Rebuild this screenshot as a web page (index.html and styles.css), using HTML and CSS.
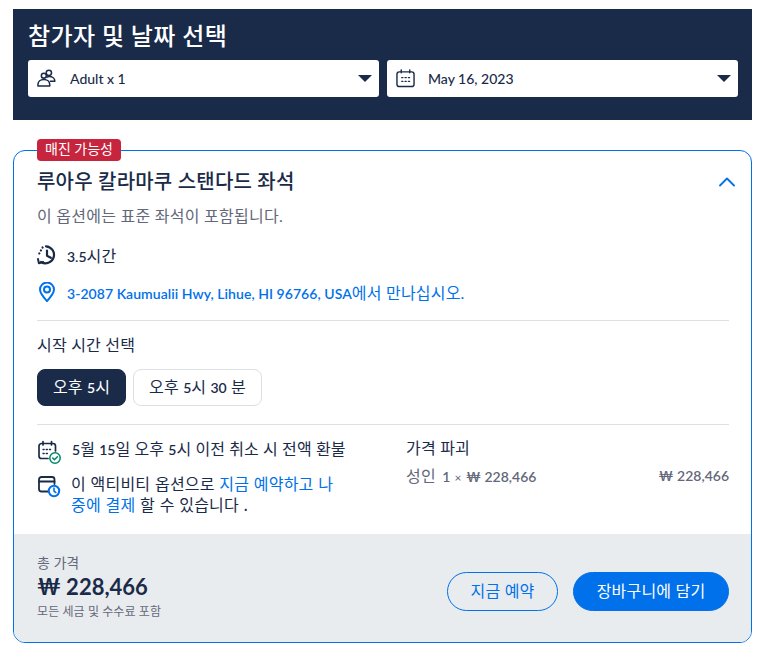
FILE: index.html
```html
<!DOCTYPE html>
<html lang="ko">
<head>
<meta charset="utf-8">
<title>참가자 및 날짜 선택</title>
<link rel="stylesheet" href="styles.css">
</head>
<body>
<main class="page">
  <section class="picker">
    <h1 class="picker-title">참가자 및 날짜 선택</h1>
    <div class="picker-row">
      <div class="select">
        <svg class="select-icon" viewBox="0 0 20 20" fill="none" stroke="#1a2b49" stroke-width="1.6" stroke-linejoin="round" stroke-linecap="round"><circle cx="12.5" cy="4" r="2.8"/><circle cx="7.2" cy="7" r="2.6"/><path d="M1 18v-1.600c0-3.200 2.700-5.400 6.200-5.400s6.200 2.200 6.200 5.400V18z"/><path d="M10.500 8.500c.7-.5 1.400-.6 2.300-.6 3.200 0 6 1.900 6 5.100h-4.800"/></svg>
        <span class="select-text">Adult x 1</span>
        <span class="caret"></span>
      </div>
      <div class="select select-date">
        <svg class="select-icon" viewBox="0 0 20 20" fill="none" stroke="#1a2b49" stroke-width="1.500" stroke-linecap="round"><rect x="1" y="3" width="18" height="15.500" rx="2.500"/><path d="M5.500 1v3M14.500 1v3"/><path stroke-width="1.400" stroke-dasharray="1.300 2.200" d="M6 9h9M6 13h9"/></svg>
        <span class="select-text">May 16, 2023</span>
        <span class="caret"></span>
      </div>
    </div>
  </section>

  <section class="card">
    <span class="badge">매진 가능성</span>
    <div class="card-body">
      <div class="option-head">
        <h2 class="option-title">루아우 칼라마쿠 스탠다드 좌석</h2>
        <svg class="chevron" viewBox="0 0 16 10" fill="none" stroke="#0071eb" stroke-width="1.800" stroke-linecap="round" stroke-linejoin="round"><path d="M1 8.500 8 1.500l7 7"/></svg>
      </div>
      <p class="option-desc">이 옵션에는 표준 좌석이 포함됩니다.</p>
      <div class="fact">
        <svg class="fact-icon" viewBox="0 0 20 20" fill="none" stroke="#1a2b49" stroke-width="2.200" stroke-linecap="round" stroke-linejoin="round"><path d="M9 1.300A8.500 8.500 0 1 1 4 17"/><path d="M10 5.500v5.300l3.800 2"/><path stroke-width="2" d="M1 14l.9 4.200 4.200-1.200"/><path stroke-dasharray="0.100 3.300" d="M5.600 2.400 1 10.800"/></svg>
        <span class="fact-text"><span class="latin">3.5</span>시간</span>
      </div>
      <div class="fact fact-link">
        <svg class="fact-icon" viewBox="0 0 20 20" fill="none" stroke="#0071eb" stroke-width="2" stroke-linejoin="round"><path d="M10 19.200C6 14.800 3 11.500 3 7.600a7 7 0 0 1 14 0c0 3.900-3 7.200-7 11.600z"/><circle cx="10" cy="7.600" r="3"/></svg>
        <span class="fact-text"><span class="latin address">3-2087 Kaumualii Hwy, Lihue, HI 96766, USA</span>에서 만나십시오.</span>
      </div>
      <hr class="rule rule-first">
      <p class="time-label">시작 시간 선택</p>
      <div class="times">
        <span class="time time-active">오후 <span class="latin">5</span>시</span>
        <span class="time">오후 <span class="latin">5</span>시 <span class="latin">30</span> 분</span>
      </div>
      <hr class="rule rule-second">
      <div class="details">
        <div class="policies">
          <div class="policy policy-cancel">
            <svg class="policy-icon" viewBox="0 0 24 24" fill="none" stroke="#1a2b49" stroke-width="1.700" stroke-linecap="round"><path d="M11 18.500H4.500A2.500 2.500 0 0 1 2 16V6a2.500 2.500 0 0 1 2.500-2.500h11.500a2.500 2.500 0 0 1 2.500 2.500v5"/><path d="M6 1.500v3.500M14.500 1.500v3.500"/><path stroke-width="1.300" stroke-dasharray="1.200 2" d="M6 9.500h9M6 13.500h5"/><circle cx="18" cy="18" r="5.200" fill="#fff" stroke="#008768" stroke-width="1.500"/><path d="m15.700 18 1.700 1.700 3-3" stroke="#008768" stroke-width="1.500"/></svg>
            <span><span class="latin">5</span>월 <span class="latin">15</span>일 오후 <span class="latin">5</span>시 이전 취소 시 전액 환불</span>
          </div>
          <div class="policy policy-pay">
            <svg class="policy-icon" viewBox="0 0 24 24" fill="none" stroke="#1a2b49" stroke-width="1.800" stroke-linecap="round"><path d="M11 17.500H4.500A2.500 2.500 0 0 1 2 15V5.500A2.500 2.500 0 0 1 4.500 3h10.500a2.500 2.500 0 0 1 2.500 2.500V10"/><path d="M2 7.500h15.500"/><circle cx="17" cy="17" r="5.200" fill="#fff" stroke="#0071eb" stroke-width="2"/><path d="M17 14v3.200l1.800 1.300" stroke="#0071eb" stroke-width="1.600"/></svg>
            <span class="policy-pay-text">이 액티비티 옵션으로 <span class="link">지금 예약하고 나중에 결제</span> 할 수 있습니다 .</span>
          </div>
        </div>
        <div class="breakdown">
          <p class="breakdown-title">가격 파괴</p>
          <div class="breakdown-row">
            <span>성인 <span class="latin count">1</span> <span class="times-sign">×</span> <span class="latin">₩ 228,466</span></span>
            <span class="latin">₩ 228,466</span>
          </div>
        </div>
      </div>
    </div>
    <div class="summary">
      <div class="total">
        <span class="total-label">총 가격</span>
        <span class="total-price">₩ 228,466</span>
        <span class="total-note">모든 세금 및 수수료 포함</span>
      </div>
      <div class="actions">
        <span class="btn btn-outline">지금 예약</span>
        <span class="btn btn-solid">장바구니에 담기</span>
      </div>
    </div>
  </section>
</main>
</body>
</html>
```
FILE: styles.css
```css
* { box-sizing: border-box; }
html, body { margin: 0; padding: 0; background: #fff; }
body {
  font-family: "Lato", "Noto Sans CJK KR", sans-serif;
  color: #1a2b49;
  font-size: 16px;
  letter-spacing: 0.2px;
}
h1, h2, p, hr { margin: 0; }
.page { width: 758px; height: 653px; padding: 9px 6px 10px 13px; overflow: hidden; }
.latin { font-size: 14px; font-weight: 600; letter-spacing: 0; }
.address { letter-spacing: 0.05px; }

.picker { height: 111px; background: #1a2b49; padding: 12px 14px 0 15px; }
.picker-title { font-size: 24px; line-height: 30px; font-weight: 500; color: #fff; height: 39px; letter-spacing: 0.4px; }
.picker-row { display: flex; gap: 8px; }
.select { flex: 1; height: 37px; background: #fff; border-radius: 3px; display: flex; align-items: center; padding: 0 7px 0 9px; }
.select-icon { width: 19px; height: 19px; flex: none; }
.select-text { flex: 1; margin-left: 13px; font-size: 14px; font-weight: 500; letter-spacing: 0; }
.select:first-child .select-text { margin-left: 14px; }
.caret { width: 0; height: 0; border-left: 7px solid transparent; border-right: 7px solid transparent; border-top: 7px solid #1a2b49; }

.card { position: relative; margin-top: 30px; height: 493px; border: 1px solid #0071eb; border-radius: 12px; display: flex; flex-direction: column; }
.badge { position: absolute; left: 23px; top: -12px; height: 22px; width: 84px; background: #c7253e; color: #fff; border-radius: 4px; font-size: 14px; line-height: 19px; text-align: center; letter-spacing: 0; }
.card-body { flex: 1; padding: 15px 22px 0 23px; }
.option-head { display: flex; justify-content: space-between; align-items: center; height: 30px; }
.option-title { font-size: 20px; line-height: 30px; font-weight: 500; }
.chevron { width: 16px; height: 10px; margin-right: -6px; margin-top: 1px; }
.option-desc { line-height: 20px; color: #63687a; margin-top: 10px; letter-spacing: 0.25px; }
.fact { display: flex; align-items: center; height: 24px; margin-top: 17px; }
.fact-link { margin-top: 13px; color: #0071eb; }
.fact-icon { width: 20px; height: 20px; flex: none; margin-right: 10px; }
.rule { border: 0; border-top: 1px solid #dcdfe4; }
.rule-first { margin-top: 16px; }
.time-label { margin-top: 14px; line-height: 20px; }
.times { display: flex; gap: 7px; margin-top: 14px; }
.time { height: 37px; padding: 0 15px; border: 1px solid #dcdfe4; border-radius: 8px; line-height: 33px; background: #fff; }
.time-active { width: 89px; text-align: center; padding: 0; background: #1a2b49; border-color: #1a2b49; color: #fff; }
.rule-second { margin-top: 18px; }
.details { display: flex; }
.policies { width: 369px; padding-top: 13px; flex: none; }
.policy { display: flex; line-height: 21px; }
.policy-icon { width: 24px; height: 24px; flex: none; margin-right: 11px; }
.policy-cancel { letter-spacing: 0.1px; }
.policy-cancel .policy-icon { margin-top: 2px; }
.policy-pay { margin-top: 9px; letter-spacing: 0.2px; }
.policy-pay .policy-icon { margin-right: 10px; margin-top: 1px; }
.policy-pay-text { width: 266px; word-break: break-all; font-family: "Noto Sans CJK KR", sans-serif; }
.link { color: #0071eb; }
.breakdown { flex: 1; padding-top: 13px; }
.breakdown-title { line-height: 20px; }
.breakdown-row { display: flex; justify-content: space-between; margin-top: 8px; line-height: 20px; color: #63687a; }
.count { margin-left: 2px; }
.times-sign { font-size: 12px; }

.summary { height: 108px; background: #e9ecef; border-radius: 0 0 11px 11px; display: flex; justify-content: space-between; padding: 0 22px 0 23px; }
.total { display: flex; flex-direction: column; padding-top: 21px; }
.total-label { font-size: 14px; line-height: 16px; color: #63687a; letter-spacing: 0; }
.total-price { font-size: 22px; line-height: 28px; font-weight: 700; margin-top: 2px; letter-spacing: 0; }
.total-note { font-size: 12px; line-height: 16px; color: #63687a; margin-top: 3px; letter-spacing: 0.1px; }
.actions { display: flex; gap: 15px; padding-top: 38px; }
.btn { height: 39px; border-radius: 20px; line-height: 35px; text-align: center; border: 1px solid #0071eb; }
.btn-outline { width: 111px; color: #0071eb; }
.btn-solid { width: 156px; background: #0071eb; color: #fff; }
```
